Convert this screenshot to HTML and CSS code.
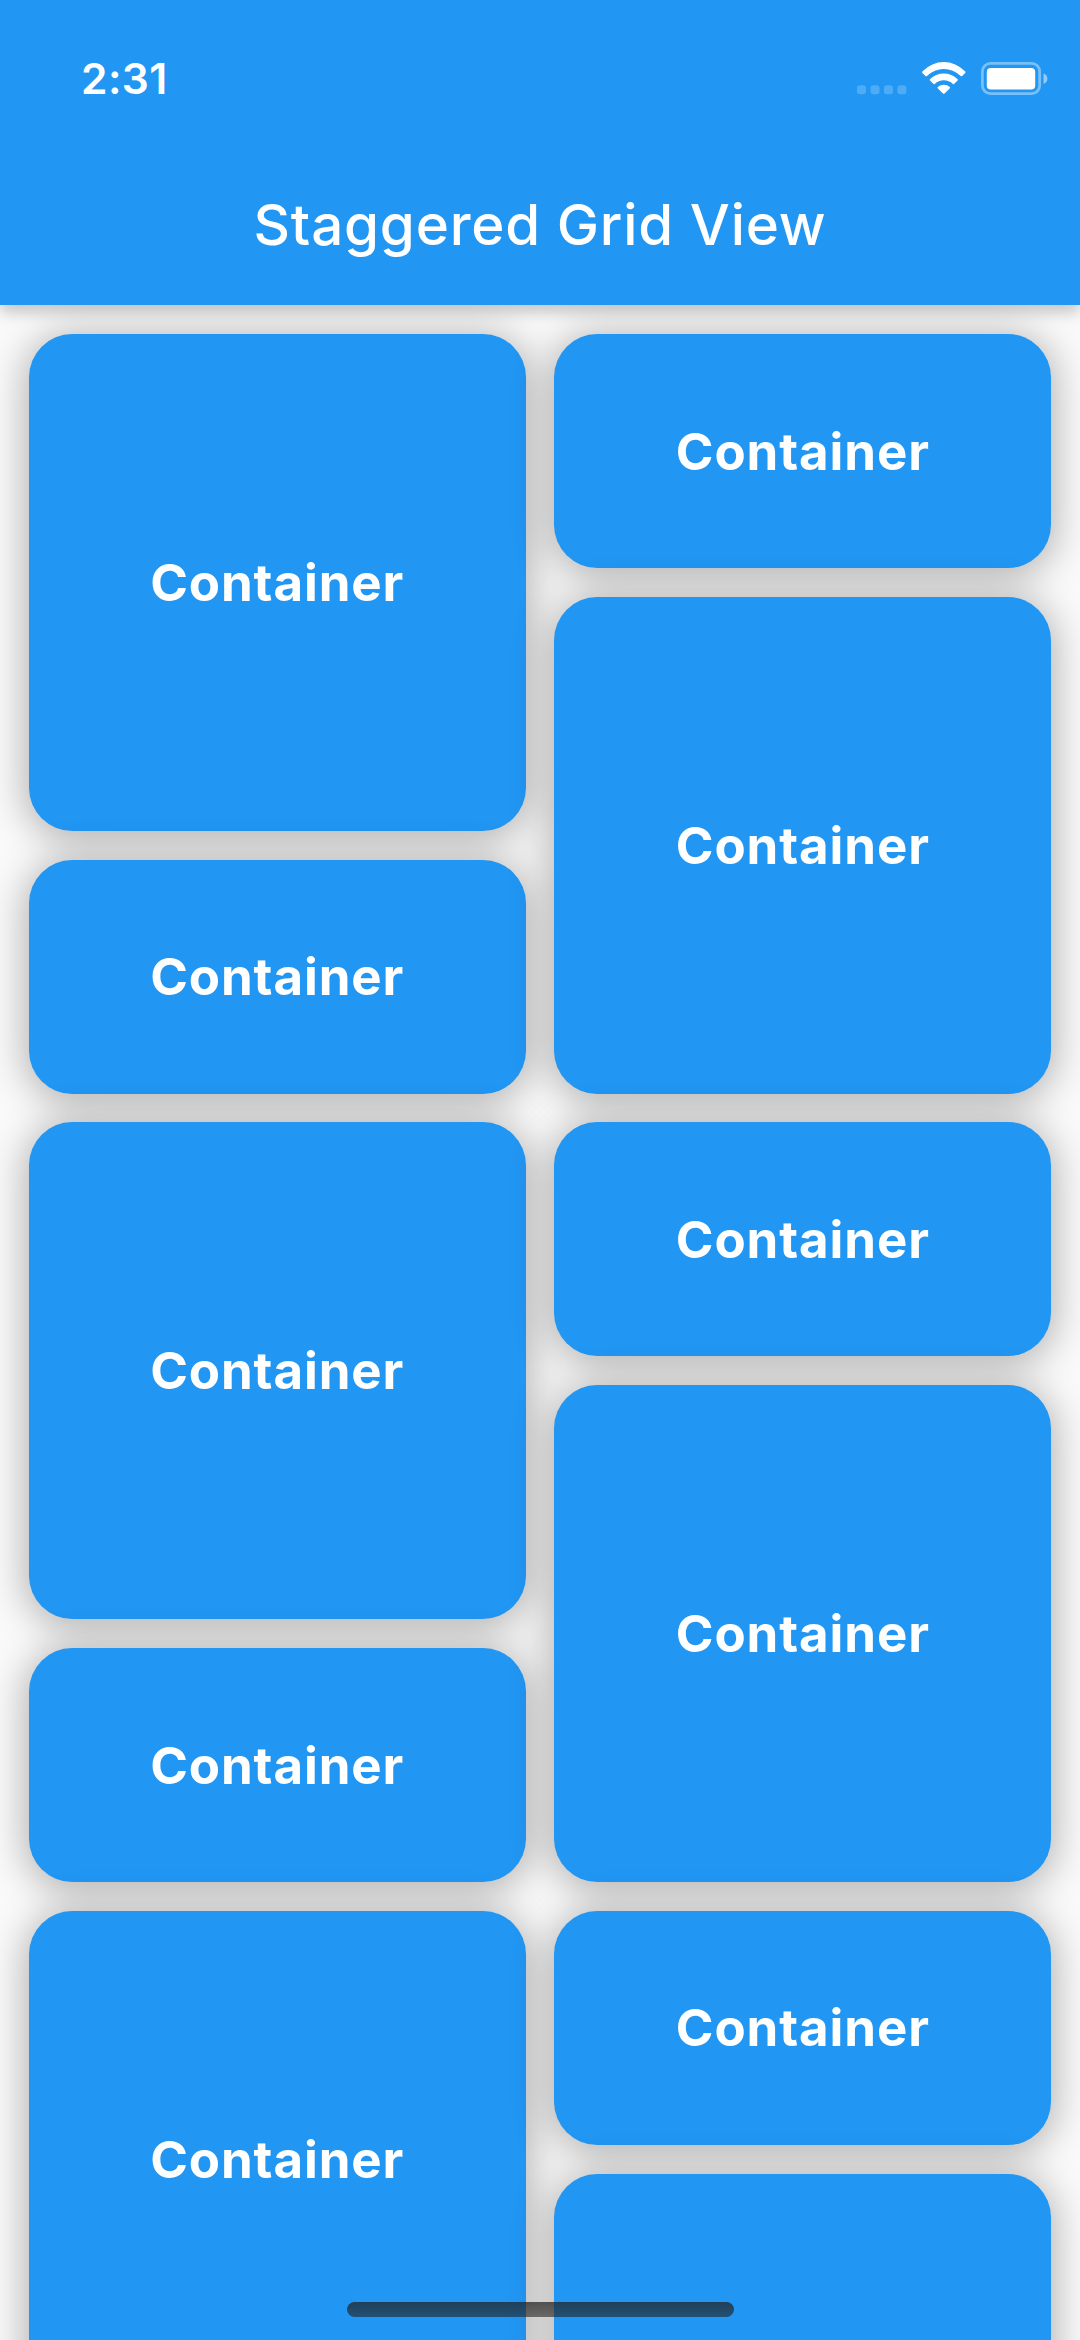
FILE: index.html
```html
<!DOCTYPE html>
<html lang="en">
<head>
<meta charset="utf-8">
<title>Staggered Grid View</title>
<link rel="stylesheet" href="styles.css">
</head>
<body>
<div class="screen">
  <header class="app-bar">
    <div class="status-bar">
      <span class="time">2:31</span>
      <svg class="status-icons" width="192" height="36" viewBox="856 60 192 36" fill="#fff">
        <g opacity=".2">
          <rect x="857" y="85.3" width="9" height="9" rx="2.8"/>
          <rect x="870.5" y="85.3" width="9" height="9" rx="2.8"/>
          <rect x="884" y="85.3" width="9" height="9" rx="2.8"/>
          <rect x="897.4" y="85.3" width="9" height="9" rx="2.8"/>
        </g>
        <path d="M922.3 71.5Q921.7 72.3 922.4 73L925.5 76Q926.2 76.6 926.9 76Q934.5 69 943.8 69T960.7 76Q961.4 76.6 962.1 76L965.2 73Q965.9 72.3 965.3 71.5Q955.8 62 943.8 62T922.3 71.5Z"/>
        <path d="M929.9 79.2Q929.4 79.9 930 80.6L933.3 83.8Q934 84.4 934.7 83.9Q938.6 80.3 943.8 80.3T952.9 83.9Q953.6 84.4 954.3 83.8L957.6 80.6Q958.2 79.9 957.7 79.2Q951.8 73.4 943.8 73.4T929.9 79.2Z"/>
        <path d="M937.8 87Q937.2 87.7 937.9 88.4L943 93.5Q943.8 94.2 944.6 93.5L949.7 88.4Q950.4 87.7 949.8 87Q947.3 84.8 943.8 84.8T937.8 87Z"/>
        <rect x="982.4" y="63.4" width="57.3" height="30.2" rx="8" fill="none" stroke="#fff" stroke-width="2.8" opacity=".4"/>
        <rect x="986.8" y="68" width="48.4" height="21.4" rx="4"/>
        <path d="M1043.5 73.6Q1047.4 75 1047.4 78.8T1043.5 84Z" opacity=".5"/>
      </svg>
    </div>
    <h1 class="title">Staggered Grid View</h1>
  </header>
  <main class="grid">
    <div class="column">
      <div class="card tall">Container</div>
      <div class="card">Container</div>
      <div class="card tall">Container</div>
      <div class="card">Container</div>
      <div class="card tall">Container</div>
    </div>
    <div class="column">
      <div class="card">Container</div>
      <div class="card tall">Container</div>
      <div class="card">Container</div>
      <div class="card tall">Container</div>
      <div class="card">Container</div>
      <div class="card tall"></div>
    </div>
  </main>
  <div class="home-indicator"></div>
</div>
</body>
</html>
```
FILE: styles.css
```css
* {
  box-sizing: border-box;
}

body {
  margin: 0;
  font-family: Inter, "Liberation Sans", sans-serif;
  color: #fff;
  background: #fafafa;
}

.screen {
  position: relative;
  display: flex;
  flex-direction: column;
  width: 1080px;
  height: 2340px;
  overflow: hidden;
}

.app-bar {
  position: relative;
  z-index: 1;
  flex: none;
  height: 305.3px;
  background: #2196f3;
  box-shadow: 0 8px 14px rgba(0, 0, 0, 0.2);
}

.status-bar {
  display: flex;
  justify-content: space-between;
  height: 144px;
  padding: 60px 32px 0 81px;
}

.time {
  height: 40px;
  font-size: 42.5px;
  line-height: 37px;
  font-weight: 600;
  letter-spacing: 0.4px;
}

.title {
  margin: 0;
  height: 161px;
  font-size: 56.5px;
  line-height: 162px;
  font-weight: 450;
  letter-spacing: 0.8px;
  text-align: center;
}

.grid {
  display: flex;
  gap: 28.8px;
  padding: 28.8px;
}

.column {
  display: flex;
  flex: 1;
  flex-direction: column;
  gap: 28.8px;
}

.card {
  display: flex;
  flex: none;
  align-items: center;
  justify-content: center;
  height: 234px;
  border-radius: 43.2px;
  background: #2196f3;
  box-shadow: 0 4px 39px 4px rgba(0, 0, 0, 0.29);
  font-size: 51px;
  font-weight: 700;
  letter-spacing: 0.9px;
}

.card.tall {
  height: 496.8px;
}

.home-indicator {
  position: absolute;
  z-index: 2;
  left: 347px;
  top: 2302px;
  width: 387px;
  height: 15px;
  border-radius: 8px;
  background: linear-gradient(rgba(33, 31, 29, 0.72), rgba(33, 31, 29, 0.58));
}
```
